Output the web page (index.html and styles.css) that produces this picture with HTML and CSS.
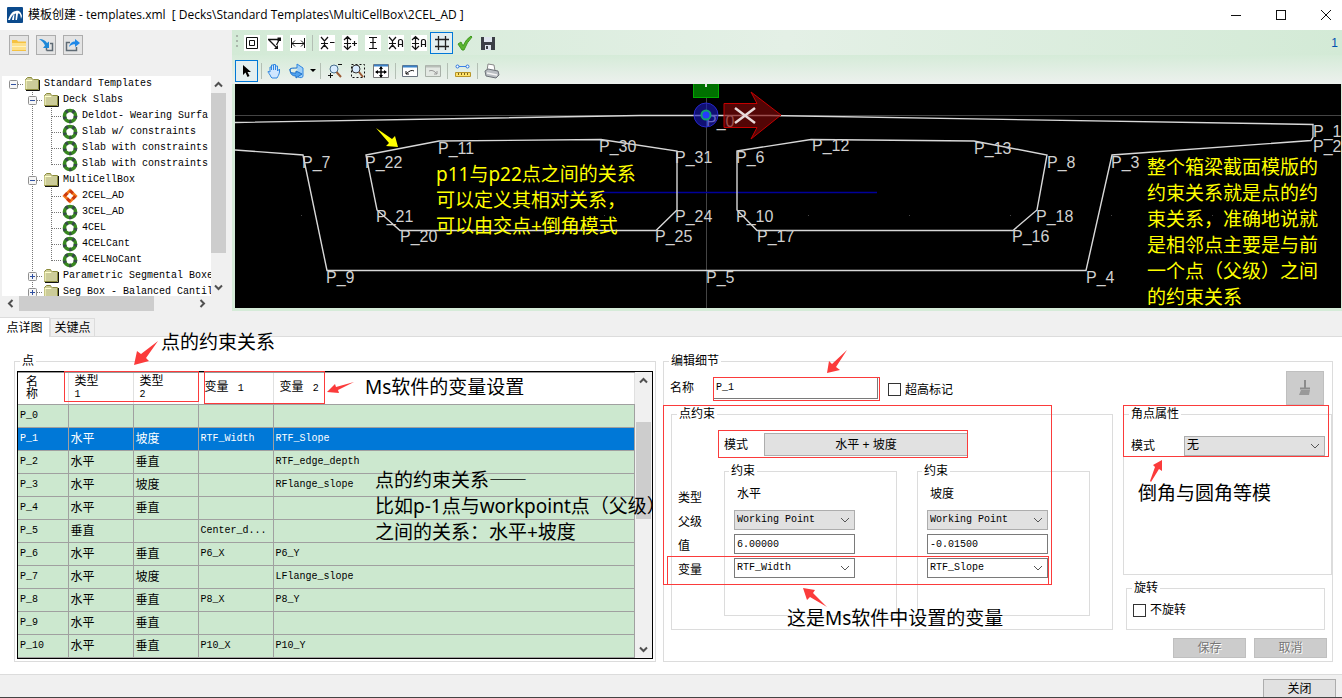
FILE: index.html
```html
<!DOCTYPE html>
<html lang="zh-CN">
<head>
<meta charset="utf-8">
<title>模板创建 - templates.xml</title>
<link rel="stylesheet" href="styles.css">
</head>
<body>
<svg class="defs" aria-hidden="true">
  <symbol id="folder" viewBox="0 0 16 16"><path d="M1.500 13.500V3.500L3.500 1.500H7.500L8.500 3.500H14.500V13.500z" fill="#cccc99" stroke="#8c8c3c"/><path d="M2 4.500H8L9 3.500M2 4V13" stroke="#ffffcc" fill="none"/><path d="M2 14.500H15.500V4" stroke="#111" fill="none"/></symbol>
  <symbol id="ring" viewBox="0 0 16 16"><circle cx="8" cy="8" r="5.500" fill="#fff" stroke="#37881f" stroke-width="3.600"/><circle cx="8" cy="8" r="5.500" fill="none" stroke="#374a4a" stroke-width="3.600" stroke-dasharray="2.400 4.510"/></symbol>
  <symbol id="diamond" viewBox="0 0 16 16"><path d="M8 2.500L13.500 8L8 13.500L2.500 8z" fill="#fff" stroke="#f47a1c" stroke-width="3"/><path d="M8 2.500L13.500 8L8 13.500L2.500 8z" fill="none" stroke="#cc3a10" stroke-width="3" stroke-dasharray="4 3.780"/></symbol>
  <symbol id="v" viewBox="0 0 19 16"><path d="M9.500 0V16" stroke="#777" stroke-dasharray="1 1"/></symbol>
  <symbol id="t" viewBox="0 0 19 16"><path d="M9.500 0V16M10 8.500H19" stroke="#777" stroke-dasharray="1 1"/></symbol>
  <symbol id="l" viewBox="0 0 19 16"><path d="M9.500 0V9M10 8.500H19" stroke="#777" stroke-dasharray="1 1"/></symbol>
  <symbol id="minus" viewBox="0 0 19 16"><path d="M9.500 0V16M14 8.500H19" stroke="#777" stroke-dasharray="1 1"/><rect x="5.500" y="4.500" width="8" height="8" rx="1" fill="#f6f6f6" stroke="#8f8f8f"/><path d="M7 8.500H12" stroke="#3050a0"/></symbol>
  <symbol id="root" viewBox="0 0 19 16"><path d="M14 8.500H19" stroke="#777" stroke-dasharray="1 1"/><rect x="5.500" y="4.500" width="8" height="8" rx="1" fill="#f6f6f6" stroke="#8f8f8f"/><path d="M7 8.500H12" stroke="#3050a0"/></symbol>
  <symbol id="plus" viewBox="0 0 19 16"><path d="M9.500 0V16M14 8.500H19" stroke="#777" stroke-dasharray="1 1"/><rect x="5.500" y="4.500" width="8" height="8" rx="1" fill="#f6f6f6" stroke="#8f8f8f"/><path d="M7 8.500H12M9.500 6V11" stroke="#3050a0"/></symbol>
  <symbol id="chev" viewBox="0 0 9 9"><path d="M1 6.500L4.500 3L8 6.500" fill="none" stroke="#505050" stroke-width="2"/></symbol>
</svg>

<header class="titlebar">
  <svg class="logo" width="16" height="16" viewBox="0 0 16 16"><rect width="16" height="16" rx="1" fill="#0b4a8c"/><path d="M1 13C3 8 5 4 9 4C11 3 14 4 15 9L14 12C13.500 8 13 6 11 6.500L10 13H8.500L9 6.500C6 7 4 10 3 13z" fill="#fff"/><path d="M5 13C5.500 10 6 8 7.500 7L7 13z" fill="#fff"/></svg>
  <h1>模板创建 - templates.xml &nbsp;[ Decks\Standard Templates\MultiCellBox\2CEL_AD ]</h1>
  <div class="winbtns">
    <button aria-label="最小化"><svg width="12" height="12"><path d="M1 6.500H11" stroke="#111"/></svg></button>
    <button aria-label="最大化"><svg width="12" height="12"><rect x="1.500" y="1.500" width="9" height="9" fill="none" stroke="#111"/></svg></button>
    <button aria-label="关闭窗口"><svg width="12" height="12"><path d="M1 1L11 11M11 1L1 11" stroke="#111"/></svg></button>
  </div>
</header>

<section class="top">
  <aside class="side">
    <div class="filebtns">
      <button aria-label="打开"><svg width="16" height="16"><path d="M1 3H6L7 4.500H15V14H1z" fill="#f5c242"/><path d="M1 6H15V13H1z" fill="#fde08a"/><path d="M1 9.500H15" stroke="#fff3c0"/></svg></button>
      <button aria-label="导入"><svg width="16" height="16"><path d="M8.500 13.500H14.500V6.500H12M8.500 13.500V11" fill="none" stroke="#5f6b75" stroke-width="1.500"/><path d="M1 2C5 2 8 4 9 6L11 4.500V11H5L7 8.500C6 6 4 4 1 2z" fill="#1e88d8"/></svg></button>
      <button aria-label="导出"><svg width="16" height="16"><path d="M5 5.500H1.500V13.500H11.500V10" fill="none" stroke="#5f6b75" stroke-width="1.500"/><path d="M4 10C5 6 7 4.500 10 4.500V2L15 6L10 10V7.500C8 7 6 8 4 10z" fill="#1e88e8"/></svg></button>
    </div>
    <div class="treebox">
      <ul class="tree">
        <li><svg class="cell"><use href="#root"/></svg><svg class="ico"><use href="#folder"/></svg>Standard Templates</li>
        <li><i class="cell"></i><svg class="cell"><use href="#minus"/></svg><svg class="ico"><use href="#folder"/></svg>Deck Slabs</li>
        <li><i class="cell"></i><svg class="cell"><use href="#v"/></svg><svg class="cell"><use href="#t"/></svg><svg class="ico"><use href="#ring"/></svg>Deldot- Wearing Surfa</li>
        <li><i class="cell"></i><svg class="cell"><use href="#v"/></svg><svg class="cell"><use href="#t"/></svg><svg class="ico"><use href="#ring"/></svg>Slab w/ constraints</li>
        <li><i class="cell"></i><svg class="cell"><use href="#v"/></svg><svg class="cell"><use href="#t"/></svg><svg class="ico"><use href="#ring"/></svg>Slab with constraints</li>
        <li><i class="cell"></i><svg class="cell"><use href="#v"/></svg><svg class="cell"><use href="#l"/></svg><svg class="ico"><use href="#ring"/></svg>Slab with constraints</li>
        <li><i class="cell"></i><svg class="cell"><use href="#minus"/></svg><svg class="ico"><use href="#folder"/></svg>MultiCellBox</li>
        <li><i class="cell"></i><svg class="cell"><use href="#v"/></svg><svg class="cell"><use href="#t"/></svg><svg class="ico"><use href="#diamond"/></svg>2CEL_AD</li>
        <li><i class="cell"></i><svg class="cell"><use href="#v"/></svg><svg class="cell"><use href="#t"/></svg><svg class="ico"><use href="#ring"/></svg>3CEL_AD</li>
        <li><i class="cell"></i><svg class="cell"><use href="#v"/></svg><svg class="cell"><use href="#t"/></svg><svg class="ico"><use href="#ring"/></svg>4CEL</li>
        <li><i class="cell"></i><svg class="cell"><use href="#v"/></svg><svg class="cell"><use href="#t"/></svg><svg class="ico"><use href="#ring"/></svg>4CELCant</li>
        <li><i class="cell"></i><svg class="cell"><use href="#v"/></svg><svg class="cell"><use href="#l"/></svg><svg class="ico"><use href="#ring"/></svg>4CELNoCant</li>
        <li><i class="cell"></i><svg class="cell"><use href="#plus"/></svg><svg class="ico"><use href="#folder"/></svg>Parametric Segmental Boxe</li>
        <li><i class="cell"></i><svg class="cell"><use href="#plus"/></svg><svg class="ico"><use href="#folder"/></svg>Seg Box - Balanced Cantil</li>
      </ul>
      <div class="vbar"><svg class="ch"><use href="#chev"/></svg><div class="vtrack"><div class="vthumb tree-thumb"></div></div><svg class="ch down"><use href="#chev"/></svg></div>
      <div class="hbar"><svg class="ch left"><use href="#chev"/></svg><div class="htrack"><div class="hthumb"></div></div><svg class="ch right"><use href="#chev"/></svg></div>
    </div>
  </aside>

  <main class="view">
    <div class="toolbar">
      <span class="grip"></span>
      <button aria-label="模板"><svg width="16" height="16"><path fill="#fff" d="M0 0H16V16H0z"/><path d="M2.500 2.500H13.500V13.500H2.500zM5.500 5.500H10.500V10.500H5.500z" fill="none" stroke="#111"/></svg></button>
      <button aria-label="折线"><svg width="16" height="16"><path fill="#fff" d="M0 0H16V16H0z"/><path d="M1 4.500H12M2 5L10 13M12.500 4L9.500 10" fill="none" stroke="#111" stroke-width="1.300"/><path d="M10.500 2.500H14V6H10.500zM7 14H11V10z" fill="#111"/></svg></button>
      <button aria-label="水平尺寸"><svg width="16" height="16"><path fill="#fff" d="M0 0H16V16H0z"/><path d="M1.500 3V13M14.500 3V13M2 8.500H14M5 5.500L2 8.500L5 11.500M11 5.500L14 8.500L11 11.500" fill="none" stroke="#111"/></svg></button>
      <span class="sep"></span>
      <button aria-label="缩小标注"><svg width="16" height="16"><path fill="#fff" d="M0 0H16V16H0z"/><path d="M2 2L5.500 6L9 2M2 14L5.500 10L9 14M5.500 5V11M2 8.500H9M11 7.500H15.500" fill="none" stroke="#111" stroke-width="1.200"/></svg></button>
      <button aria-label="放大标注"><svg width="16" height="16"><path fill="#fff" d="M0 0H16V16H0z"/><path d="M2 5L5.500 1.500L9 5M2 11L5.500 14.500L9 11M5.500 2V14M2 8.500H9M10 8.500H15M12.500 6V11" fill="none" stroke="#111" stroke-width="1.200"/></svg></button>
      <button aria-label="竖向"><svg width="16" height="16"><path fill="#fff" d="M0 0H16V16H0z"/><path d="M4 2.500H12M4 13.500H12M8 2V14M5 7.500H11" fill="none" stroke="#111" stroke-width="1.200"/></svg></button>
      <button aria-label="自动缩小"><svg width="16" height="16"><path fill="#fff" d="M0 0H16V16H0z"/><path d="M1 2L4.500 6L8 2M1 14L4.500 10L8 14M4.500 5V11M1 8.500H8M10.500 12V6.500Q10.500 4.500 12.500 4.500T14.500 6.500V12M10.500 9.500H14.500" fill="none" stroke="#111" stroke-width="1.200"/></svg></button>
      <button aria-label="自动放大"><svg width="16" height="16"><path fill="#fff" d="M0 0H16V16H0z"/><path d="M1 5L4.500 1.500L8 5M1 11L4.500 14.500L8 11M4.500 2V14M1 8.500H8M10.500 12V6.500Q10.500 4.500 12.500 4.500T14.500 6.500V12M10.500 9.500H14.500" fill="none" stroke="#111" stroke-width="1.200"/></svg></button>
      <button class="on" aria-label="网格"><svg width="16" height="16"><path d="M4.500 1V15M11.500 1V15M1 4.500H15M1 11.500H15" stroke="#222" stroke-width="1.300"/></svg></button>
      <button aria-label="检查"><svg width="16" height="16"><path d="M1 9L4 7L6 11Q9 4 14 1L15 2Q10 7 7 15H5z" fill="#5cb531" stroke="#3f9a20"/></svg></button>
      <button aria-label="保存模板"><svg width="16" height="16"><path d="M1 2H15V15H1z" fill="#3b3f46"/><path d="M4 2H12V7H4zM5 10H11V15H5z" fill="#dfe5ee"/><path d="M6 11H8V14H6z" fill="#3b3f46"/></svg></button>
      <a class="count" href="#">1</a>
    </div>
    <div class="toolbar second">
      <button class="on" aria-label="选择"><svg width="16" height="16"><path d="M4 2V12L6.500 9.500L8.500 14L10.500 13L8.500 9H12z" fill="#000"/></svg></button>
      <span class="sep thin"></span>
      <button aria-label="平移"><svg width="16" height="16"><path d="M5 14C4 11 2 10 2 8.500L4 9V4H5.500V7V2H7.500V7V1.500H9.500V7V3H11.500V8L13.500 6V9C13 12 12 13 11 15H6z" fill="#cfe6ff" stroke="#2f86e0"/></svg></button>
      <button aria-label="旋转"><svg width="16" height="16"><path d="M8 5V1L14 5V13C14 15 11 15 9 14" fill="#9fd0f8" stroke="#2f86e0"/><path d="M1 6C1 10 3 10 7 10V8L13 11L7 15V13C3 13 1 11 1 6C2 5 4 5 8 5" fill="#4fa2ee" stroke="#1f72cc"/></svg></button>
      <button class="caret" aria-label="旋转选项"><svg width="6" height="4"><path d="M0 0H6L3 3z"/></svg></button>
      <span class="sep"></span>
      <button aria-label="缩放"><svg width="16" height="16"><circle cx="7" cy="6" r="4" fill="#d8ecff" stroke="#49708f"/><path d="M9.500 9L14 14" stroke="#9a5a34" stroke-width="2"/><path d="M11 1.500H15M1 12.500H6M3.500 10V15" stroke="#111"/></svg></button>
      <button aria-label="窗口缩放"><svg width="16" height="16"><path d="M1.500 1.500H14.500V14.500H1.500z" fill="none" stroke="#111" stroke-dasharray="2 2"/><circle cx="6" cy="6" r="4" fill="#d8ecff" stroke="#333"/><path d="M9 9L13 14" stroke="#9a5a34" stroke-width="2"/></svg></button>
      <button aria-label="全图"><svg width="16" height="16"><path d="M.5 1.500H15.500V14.500H.5z" fill="#fff" stroke="#777"/><path d="M1 2.500H15" stroke="#3b82c8" stroke-width="2"/><path d="M8 4V14M3 9H13" stroke="#111" stroke-width="1.500"/><path d="M8 3L10 6H6zM8 15L6 12H10zM2 9L5 7V11zM14 9L11 7V11z"/></svg></button>
      <span class="sep"></span>
      <button aria-label="上一视图"><svg width="16" height="16"><path d="M.5 2.500H15.500V13.500H.5z" fill="#fff" stroke="#68727c"/><path d="M1 3.500H15" stroke="#3b82c8" stroke-width="2"/><path d="M4 8V11H7M4 11Q9 6 12 8" stroke="#111" fill="none"/></svg></button>
      <button aria-label="下一视图"><svg width="16" height="16"><path d="M.5 2.500H15.500V13.500H.5z" fill="#e3e8e3" stroke="#a8b0a8"/><path d="M1 3.500H15" stroke="#b8beb8" stroke-width="2"/><path d="M12 8V11H9M12 11Q8 6 4 8" stroke="#999" fill="none"/></svg></button>
      <span class="sep wide"></span>
      <button aria-label="测量"><svg width="16" height="16"><path d="M3 3.500H13" stroke="#3b82e8"/><circle cx="2.500" cy="3.500" r="1.500" fill="#fff" stroke="#2874dc"/><circle cx="12.500" cy="3.500" r="1.500" fill="#fff" stroke="#2874dc"/><path d="M.5 9.500H15.500V13.500H.5z" fill="#ffe36a" stroke="#b8962a"/><path d="M3.500 10V12M6.500 10V12M9.500 10V12M12.500 10V12" stroke="#7a621a"/></svg></button>
      <span class="sep"></span>
      <button aria-label="打印"><svg width="16" height="16"><path d="M3 8L4 1L10 2L11 8z" fill="#fff" stroke="#888"/><path d="M1 8L4 6L14 8L15 12L12 15L2 13z" fill="#b9bdc2" stroke="#6d7278"/><path d="M3 10L13 12" stroke="#f4f4f4" stroke-width="1.500"/></svg></button>
    </div>
    <svg class="canvas" viewBox="235 84 1106 224" preserveAspectRatio="xMidYMid slice">
      <rect x="235" y="84" width="1106" height="224" fill="#000"/>
      <path d="M235 115.500H1341M706.500 84V308" stroke="#444"/>
      <path d="M535 192.500H877" stroke="#00009a" stroke-width="1.500"/>
      <g fill="#444"><rect x="301" y="215" width="1" height="1"/><rect x="604" y="215" width="1" height="1"/><rect x="808" y="215" width="1" height="1"/><rect x="909" y="215" width="1" height="1"/><rect x="1010" y="215" width="1" height="1"/><rect x="1111" y="215" width="1" height="1"/><rect x="1212" y="215" width="1" height="1"/></g>
      <g fill="none" stroke="#d8d8d8" stroke-width="1.400">
        <path d="M235 122.500L640 115.500H770L1313 124.500V137L1311 140.500L1112 155L1086 270.500H327L303 155L235 150"/>
        <path d="M366 155L439 141L601 139.500L677 151V210L656 230.500H400L377 210z"/>
        <path d="M737 151L811 139.500L974 141L1047 155L1037 210L1013 230.500H757L737 210z"/>
      </g>
      <rect x="693.500" y="80" width="25" height="17.500" fill="#007000" stroke="#00a800"/>
      <path d="M706 84V87" stroke="#ddd" stroke-width="2"/>
      <g class="pt">
        <text x="302" y="168">P_7</text><text x="365" y="168">P_22</text><text x="438" y="154">P_11</text><text x="599" y="152">P_30</text><text x="675" y="163">P_31</text><text x="376" y="222">P_21</text><text x="400" y="242">P_20</text><text x="675" y="222">P_24</text><text x="655" y="242">P_25</text><text x="326" y="283">P_9</text><text x="706" y="283">P_5</text><text x="706" y="127">P_0</text><text x="736" y="163">P_6</text><text x="812" y="151">P_12</text><text x="736" y="222">P_10</text><text x="757" y="242">P_17</text><text x="974" y="154">P_13</text><text x="1047" y="168">P_8</text><text x="1036" y="222">P_18</text><text x="1012" y="242">P_16</text><text x="1111" y="168">P_3</text><text x="1086" y="283">P_4</text><text x="1313" y="137">P_1</text><text x="1313" y="152">P_2</text>
      </g>
      <circle cx="706" cy="115" r="12" fill="#1a1ac0" fill-opacity=".6" stroke="#2626c8"/>
      <circle cx="706" cy="115" r="4.500" fill="#2638ff" stroke="#10a070" stroke-width="2"/>
      <path d="M724 103.500H757L751 92L781 115L751 139L757 127.500H724z" fill="#800808" fill-opacity=".65" stroke="#c40000"/>
      <path d="M735 108L755 123M755 108L735 123" stroke="#e8dada" stroke-width="2.500"/>
    </svg>
  </main>
</section>

<nav class="tabs"><button class="active">点详图</button><button>关键点</button></nav>

<section class="panel">
  <fieldset class="points">
    <legend>点</legend>
    <div class="frame">
      <div class="tablewrap">
        <table>
          <colgroup><col class="c50"><col class="c65"><col class="c65"><col class="c75"><col></colgroup>
          <thead><tr><th><span class="narrow">名称</span></th><th>类型<br><span class="m">1</span></th><th>类型<br><span class="m">2</span></th><th>变量 <span class="m">&nbsp;1</span></th><th>变量 <span class="m">&nbsp;2</span></th></tr></thead>
          <tbody>
            <tr><td class="m">P_0</td><td></td><td></td><td class="m"></td><td class="m"></td></tr>
            <tr class="sel"><td class="m">P_1</td><td>水平</td><td>坡度</td><td class="m">RTF_Width</td><td class="m">RTF_Slope</td></tr>
            <tr><td class="m">P_2</td><td>水平</td><td>垂直</td><td class="m"></td><td class="m">RTF_edge_depth</td></tr>
            <tr><td class="m">P_3</td><td>水平</td><td>坡度</td><td class="m"></td><td class="m">RFlange_slope</td></tr>
            <tr><td class="m">P_4</td><td>水平</td><td>垂直</td><td class="m"></td><td class="m"></td></tr>
            <tr><td class="m">P_5</td><td>垂直</td><td></td><td class="m">Center_d...</td><td class="m"></td></tr>
            <tr><td class="m">P_6</td><td>水平</td><td>垂直</td><td class="m">P6_X</td><td class="m">P6_Y</td></tr>
            <tr><td class="m">P_7</td><td>水平</td><td>坡度</td><td class="m"></td><td class="m">LFlange_slope</td></tr>
            <tr><td class="m">P_8</td><td>水平</td><td>垂直</td><td class="m">P8_X</td><td class="m">P8_Y</td></tr>
            <tr><td class="m">P_9</td><td>水平</td><td>垂直</td><td class="m"></td><td class="m"></td></tr>
            <tr><td class="m">P_10</td><td>水平</td><td>垂直</td><td class="m">P10_X</td><td class="m">P10_Y</td></tr>
            <tr><td></td><td></td><td></td><td></td><td></td></tr>
          </tbody>
        </table>
      </div>
      <div class="vbar"><svg class="ch"><use href="#chev"/></svg><div class="vtrack"><div class="vthumb table-thumb"></div></div><svg class="ch down"><use href="#chev"/></svg></div>
    </div>
  </fieldset>

  <fieldset class="edit">
    <legend>编辑细节</legend>
    <div class="namerow">
      <label for="nm">名称</label><input class="txt" id="nm" value="P_1">
      <div class="check"><input type="checkbox" id="super"><label for="super">超高标记</label></div>
      <button class="brush" disabled aria-label="清除"><svg width="16" height="18"><path d="M8 1V10" stroke="#8c8c8c" stroke-width="2"/><path d="M3 9.500H13" stroke="#8c8c8c" stroke-width="2"/><path d="M4 11H13L12 16H2z" fill="#999"/></svg></button>
    </div>
    <div class="cols">
      <fieldset class="constraint">
        <legend>点约束</legend>
        <div class="moderow"><span>模式</span><button class="btn">水平 + 坡度</button></div>
        <div class="pair">
          <div class="labels"><span>类型</span><span>父级</span><span>值</span><span>变量</span></div>
          <fieldset class="sub">
            <legend>约束</legend>
            <p>水平</p>
            <select aria-label="父级" class="grey"><option>Working Point</option></select>
            <input class="txt" aria-label="值" value="6.00000">
            <select aria-label="变量"><option>RTF_Width</option></select>
          </fieldset>
          <fieldset class="sub">
            <legend>约束</legend>
            <p>坡度</p>
            <select aria-label="父级" class="grey"><option>Working Point</option></select>
            <input class="txt" aria-label="值" value="-0.01500">
            <select aria-label="变量"><option>RTF_Slope</option></select>
          </fieldset>
        </div>
      </fieldset>
      <div class="rightcol">
        <fieldset class="corner">
          <legend>角点属性</legend>
          <div class="cornerrow"><label for="cm">模式</label><select id="cm" class="grey"><option>无</option></select></div>
        </fieldset>
        <fieldset class="rot">
          <legend>旋转</legend>
          <div class="check"><input type="checkbox" id="nr"><label for="nr">不旋转</label></div>
        </fieldset>
        <div class="actions"><button class="btn off" disabled>保存</button><button class="btn off" disabled>取消</button></div>
      </div>
    </div>
  </fieldset>
</section>

<footer class="foot"><button class="btn">关闭</button></footer>

<div class="notes">
  <div class="box type"></div><div class="box vars"></div><div class="box name"></div><div class="box cons"></div><div class="box mode"></div><div class="box var"></div><div class="box crn"></div>
  <p class="note y n1">p11与p22点之间的关系<br>可以定义其相对关系，<br>可以由交点+倒角模式</p>
  <p class="note y n2">整个箱梁截面模版的<br>约束关系就是点的约<br>束关系，准确地说就<br>是相邻点主要是与前<br>一个点（父级）之间<br>的约束关系</p>
  <p class="note n3">点的约束关系</p>
  <p class="note n4">Ms软件的变量设置</p>
  <p class="note n5">点的约束关系<span class="dash">——</span><br>比如p-1点与workpoint点（父级）<br>之间的关系：水平+坡度</p>
  <p class="note n6">这是Ms软件中设置的变量</p>
  <p class="note n7">倒角与圆角等模</p>
  <svg class="arrows" width="1342" height="698">
    <path fill="#ff0" d="M398 147L386 146L389 143L376 128L392 139L395 136z"/>
    <g fill="#fb3b3b"><path d="M134 365L137 351L141 354L158 341L146 358L149 361z"/><path d="M327 392L335 384L336 387L354 382L338 390L339 393z"/><path d="M827 373L829 361L832 364L847 350L836 367L840 370z"/><path d="M803 588L815 590L813 593L827 607L810 597L807 600z"/><path d="M1162 460V471L1159 469L1151 482L1150 481L1155 467L1153 465z"/></g>
  </svg>
</div>
</body>
</html>
```

FILE: styles.css
```css
* { box-sizing: border-box; }
body {
  margin: 0;
  height: 100vh;
  display: flex;
  flex-direction: column;
  position: relative;
  overflow: hidden;
  background: #f0f0f0;
  color: #000;
  font: 12px/14px "Liberation Sans", "Noto Sans CJK SC", sans-serif;
}
button, input, select { font: inherit; color: inherit; margin: 0; padding: 0; border-radius: 0; }
button { background: none; border: 0; }
p { margin: 0; }
svg { display: block; flex: none; }
.defs { position: absolute; width: 0; height: 0; }
.m, .tree, .txt, select { font-family: "Liberation Mono", "Noto Sans CJK SC", monospace; font-size: 10px; }

.titlebar { height: 30px; flex: none; display: flex; align-items: center; background: #fff; padding-left: 7px; }
.titlebar h1 { margin: 0 0 0 5px; font: 12px/18px "Open Sans", "Noto Sans CJK SC", sans-serif; white-space: pre; flex: 1; }
.winbtns { display: flex; }
.winbtns button { width: 45px; height: 30px; display: flex; align-items: center; justify-content: center; }
.winbtns button:last-child { margin-right: -6px; }

.top { display: flex; flex: none; height: 281px; }
.side { width: 232px; flex: none; display: flex; flex-direction: column; }
.filebtns { display: flex; gap: 7px; padding: 5px 0 0 9px; height: 46px; flex: none; }
.filebtns button { width: 20px; height: 20px; border: 1px solid #adadad; background: #e4e4e4; display: flex; align-items: center; justify-content: center; }
.treebox { display: grid; grid-template: 220px 15px / 209px 15px; margin-left: 2px; }
.tree { list-style: none; margin: 0; padding: 0 0 0 2px; background: #fff; overflow: hidden; }
.tree li { display: flex; height: 16px; line-height: 16px; white-space: pre; }
.cell { width: 19px; height: 16px; flex: none; }
.ico { width: 16px; height: 16px; margin: 0 4px 0 1px; }
.vbar { display: flex; flex-direction: column; align-items: center; background: #f0f0f0; padding: 4px 0; gap: 4px; }
.vtrack { flex: 1; width: 15px; }
.vthumb { background: #cdcdcd; }
.tree-thumb { height: 160px; }
.table-thumb { height: 97px; margin-top: 33px; }
.ch { width: 9px; height: 9px; }
.down { transform: rotate(180deg); }
.left { transform: rotate(-90deg); }
.right { transform: rotate(90deg); }
.hbar { display: flex; align-items: center; padding: 0 4px; gap: 4px; }
.htrack { flex: 1; height: 15px; }
.hthumb { width: 135px; height: 15px; background: #cdcdcd; }

.view { flex: 1; min-width: 0; display: flex; flex-direction: column; padding: 0 1px 0 3px; background: #d5ebd8; }
.toolbar { height: 25px; flex: none; display: flex; align-items: center; margin: 0 -1px 0 -3px; padding-left: 3px; background: linear-gradient(90deg, #d3ead6, #e4f0e6 50%, #d3ead6); }
.toolbar.second { height: 29px; padding-top: 3px; background: linear-gradient(#d5ebd8, #edf1ee); }
.toolbar button { width: 23px; height: 22px; display: flex; align-items: center; justify-content: center; }
.toolbar .on { border: 1px solid #0078d7; background: #e3eff0; }
.toolbar .caret { width: 9px; }
.grip { width: 2px; height: 15px; margin: 0 2px 0 1px; background: repeating-linear-gradient(#a9b5aa 0 2px, transparent 2px 5px); }
.sep { width: 6px; height: 16px; background: linear-gradient(90deg, transparent 3px, #b3bfb4 3px 4px, transparent 4px); }
.thin { width: 4px; }
.wide { width: 7px; }
.count { margin-left: auto; padding-right: 4px; color: #0050b0; text-decoration: none; }
.canvas { width: 100%; height: 224px; }
.pt { fill: #d0d0d0; font: 16px "Liberation Sans", sans-serif; }

.tabs { display: flex; align-items: flex-end; height: 26px; flex: none; border-bottom: 1px solid #dcdcdc; }
.tabs button { height: 18px; width: 45px; border: 1px solid #dcdcdc; border-bottom: 0; }
.tabs .active { height: 20px; width: 50px; border-left: 0; background: #fff; margin-bottom: -1px; }

.panel { flex: 1; min-height: 0; display: flex; gap: 7px; background: #fff; padding: 17px 9px 12px 14px; }
fieldset { margin: 0; padding: 0; border: 1px solid #dcdcdc; min-width: 0; }
legend { margin-left: 5px; padding: 0 2px; line-height: 14px; }
.points { flex: 1 1 642px; padding: 3px 2px 2px; }
.points legend { margin-left: 3px; }
.frame { height: 288px; display: flex; border: 1px solid #000; }
.tablewrap { flex: 1; overflow: hidden; border-top: 1px solid #999; }
table { width: 100%; border-collapse: collapse; table-layout: fixed; }
.c50 { width: 50px; }
.c65 { width: 65px; }
.c75 { width: 75px; }
th { height: 31px; font-weight: normal; text-align: left; line-height: 12px; padding: 0 0 0 6px; border-right: 1px solid #e0e0e0; border-bottom: 1px solid #a0a0a0; }
th .narrow { display: block; width: 12px; margin-left: 2px; }
td { height: 23px; padding: 0 2px; background: #cce8cf; border-right: 1px solid #a0a0a0; border-bottom: 1px solid #a0a0a0; line-height: 14px; white-space: nowrap; }
.sel td { background: #0078d7; color: #fff; }
.frame .vbar { width: 17px; }

.edit { flex: 1 1 670px; }
.namerow { display: flex; align-items: center; height: 39px; padding: 2px 8px 2px 6px; }
.namerow > label { width: 43px; }
.txt { border: 1px solid #7a7a7a; background: #fff; padding: 0 2px; }
.namerow .txt { width: 165px; height: 22px; margin-right: 4px; }
.check { display: flex; align-items: center; padding: 8px 6px 4px; }
input[type="checkbox"] { appearance: none; width: 13px; height: 13px; border: 1px solid #333; background: #fff; margin-right: 4px; flex: none; }
.brush { width: 38px; height: 34px; margin-left: auto; background: #ccc; border: 1px solid #bfbfbf; display: flex; align-items: center; justify-content: center; }
.cols { display: flex; gap: 10px; padding-left: 7px; align-items: flex-start; }
.constraint { flex: 1; height: 223px; }
.moderow { display: flex; align-items: center; padding: 12px 0 8px 52px; }
.moderow span { width: 40px; }
.btn { height: 20px; width: 73px; background: #e1e1e1; border: 1px solid #adadad; }
.moderow .btn { width: 204px; height: 23px; }
.pair { display: flex; padding-left: 6px; }
.labels { width: 46px; padding-top: 22px; display: flex; flex-direction: column; }
.labels span { line-height: 24px; }
.sub { width: 173px; height: 152px; padding: 8px 9px 0; margin-right: 20px; }
.sub legend { margin-left: -5px; }
.sub p { height: 16px; line-height: 16px; margin: 0 0 8px 3px; }
.sub select, .sub .txt { display: block; width: 121px; height: 20px; margin-bottom: 4px; }
select { appearance: none; border: 1px solid #7a7a7a; padding: 0 2px; background: #fff url("data:image/svg+xml,%3Csvg xmlns='http://www.w3.org/2000/svg' width='10' height='6'%3E%3Cpath d='M1 1L5 5L9 1' fill='none' stroke='%23555'/%3E%3C/svg%3E") no-repeat right 4px center; }
select.grey { background-color: #e1e1e1; border-color: #adadad; }
.rightcol { width: 209px; }
.corner { height: 168px; }
.cornerrow { display: flex; align-items: center; padding: 15px 6px 0 7px; }
.cornerrow label { width: 53px; }
.cornerrow select { flex: 1; height: 20px; font-size: 12px; }
.rot { height: 49px; margin: 6px 7px 0 3px; }
.actions { display: flex; justify-content: flex-end; gap: 8px; padding: 8px 5px 0 0; }
.off { background: #ccc; border-color: #bfbfbf; color: #777; text-shadow: 1px 1px #fff; }

.foot { height: 24px; flex: none; display: flex; justify-content: flex-end; align-items: flex-end; padding-right: 6px; border-top: 1px solid #dcdcdc; border-bottom: 1px solid #444; }
.foot .btn { height: 18px; border-bottom: 0; }

.notes { position: absolute; inset: 0; pointer-events: none; overflow: hidden; }
.notes > * { position: absolute; }
.arrows { left: 0; top: 0; }
.box { border: 1px solid #fb3b3b; }
.type { left: 64px; top: 371px; width: 135px; height: 31px; }
.vars { left: 204px; top: 371px; width: 121px; height: 33px; }
.name { left: 713px; top: 377px; width: 167px; height: 24px; }
.cons { left: 663px; top: 405px; width: 389px; height: 180px; }
.mode { left: 718px; top: 430px; width: 250px; height: 28px; }
.var { left: 667px; top: 556px; width: 382px; height: 29px; }
.crn { left: 1123px; top: 405px; width: 206px; height: 52px; }
.note { font: 19px/26px "Noto Sans", "Noto Sans CJK SC", sans-serif; white-space: nowrap; }
.dash { font-family: "Noto Sans CJK SC", sans-serif; }
.y { color: #ff0; }
.n1 { left: 436px; top: 161px; }
.n2 { left: 1147px; top: 154px; }
.n3 { left: 161px; top: 329px; }
.n4 { left: 365px; top: 374px; }
.n5 { left: 375px; top: 466px; }
.n6 { left: 787px; top: 605px; }
.n7 { left: 1138px; top: 480px; }
```
